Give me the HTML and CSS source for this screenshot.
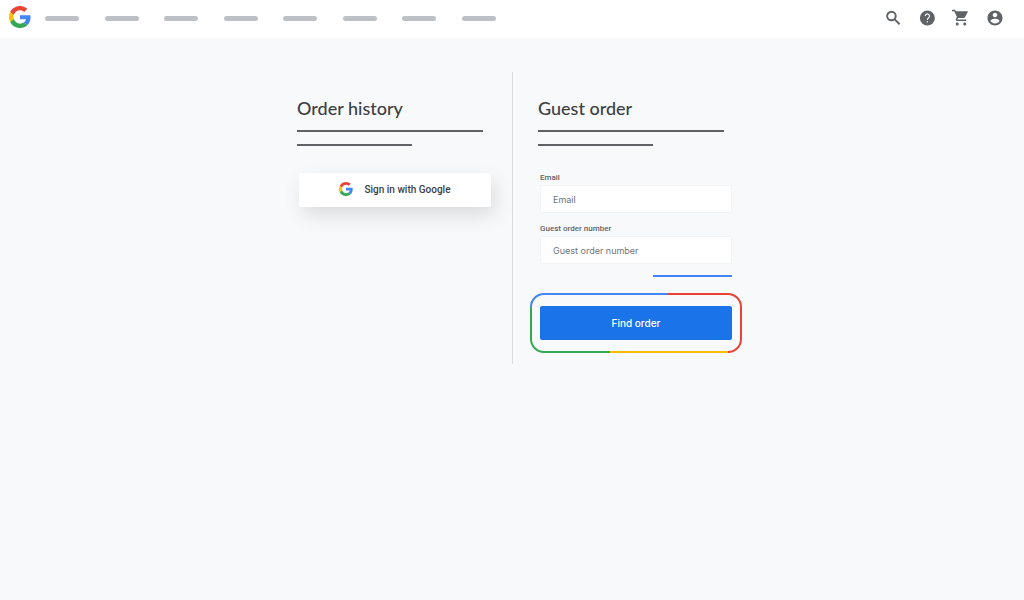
FILE: index.html
```html
<!DOCTYPE html>
<html lang="en">
<head>
  <meta charset="UTF-8" />
  <meta name="viewport" content="width=device-width, initial-scale=1.0"/>
  <title>Find your order</title>
  <link rel="stylesheet" href="styles.css">
</head>
<body>

  <svg width="0" height="0" class="sprite" aria-hidden="true">
    <symbol id="g-logo" viewBox="0 0 48 48">
      <path fill="#ea4335" d="M24 9.500c3.540 0 6.710 1.220 9.210 3.600l6.850-6.850C35.900 2.380 30.470 0 24 0 14.620 0 6.510 5.380 2.560 13.220l7.980 6.190C12.430 13.720 17.740 9.500 24 9.500z"/>
      <path fill="#4285f4" d="M46.980 24.550c0-1.570-.15-3.090-.38-4.550H24v9.020h12.940c-.58 2.960-2.260 5.480-4.780 7.180l7.730 6c4.510-4.180 7.090-10.360 7.090-17.650z"/>
      <path fill="#fbbc05" d="M10.530 28.590c-.48-1.450-.76-2.990-.76-4.590s.27-3.140.76-4.590l-7.980-6.190C.92 16.460 0 20.120 0 24c0 3.880.92 7.540 2.560 10.780l7.970-6.190z"/>
      <path fill="#34a853" d="M24 48c6.480 0 11.930-2.130 15.890-5.810l-7.730-6c-2.150 1.450-4.920 2.300-8.160 2.300-6.260 0-11.570-4.220-13.470-9.910l-7.980 6.190C6.510 42.620 14.620 48 24 48z"/>
    </symbol>
  </svg>

  <header>
    <a class="logo" href="#" aria-label="Google home"><svg><use href="#g-logo"/></svg></a>

    <nav aria-label="Main">
      <a href="#" aria-label="Menu item 1"></a>
      <a href="#" aria-label="Menu item 2"></a>
      <a href="#" aria-label="Menu item 3"></a>
      <a href="#" aria-label="Menu item 4"></a>
      <a href="#" aria-label="Menu item 5"></a>
      <a href="#" aria-label="Menu item 6"></a>
      <a href="#" aria-label="Menu item 7"></a>
      <a href="#" aria-label="Menu item 8"></a>
    </nav>

    <div class="actions">
      <button type="button" aria-label="Search">
        <svg viewBox="0 0 24 24"><g fill="none" stroke="#5f6368" stroke-width="2.600"><circle cx="9.900" cy="9.400" r="5.700"/><path d="M14 13.500l6.800 6.800"/></g></svg>
      </button>
      <button type="button" aria-label="Help">
        <svg viewBox="0 0 24 24"><circle cx="12.500" cy="12" r="10"/><path d="M9.700 9.400a2.800 2.800 0 1 1 4.500 2.200c-1.100.8-1.700 1.400-1.700 2.900M12.500 16.200v1.800" fill="none" stroke="#fff" stroke-width="1.500"/></svg>
      </button>
      <button type="button" aria-label="Cart">
        <svg viewBox="0 0 24 24"><path d="M7 18c-1.100 0-1.990.9-1.990 2S5.900 22 7 22s2-.9 2-2-.9-2-2-2zM0 1v2h3l3.600 7.590-1.350 2.450c-.16.28-.25.61-.25.960 0 1.100.9 2 2 2h12v-2H7.420c-.14 0-.25-.11-.25-.25l.03-.12.900-1.630h7.450c.75 0 1.410-.41 1.750-1.030l3.580-6.490A1 1 0 0 0 20 3H5.210l-.94-2H0zm17 17c-1.100 0-1.990.9-1.990 2s.89 2 1.990 2 2-.9 2-2-.9-2-2-2z"/></svg>
      </button>
      <button type="button" aria-label="Account">
        <svg viewBox="0 0 24 24"><path d="M12 2C6.480 2 2 6.480 2 12s4.480 10 10 10 10-4.480 10-10S17.520 2 12 2zm0 3c1.660 0 3 1.340 3 3s-1.340 3-3 3-3-1.340-3-3 1.340-3 3-3zm0 14.200c-2.500 0-4.710-1.280-6-3.220.03-1.990 4-3.080 6-3.080 1.990 0 5.970 1.090 6 3.080-1.290 1.940-3.500 3.220-6 3.220z"/></svg>
      </button>
    </div>
  </header>

  <main>
    <section class="history">
      <h1>Order history</h1>
      <div class="line"></div>
      <div class="line short"></div>
      <button type="button" class="signin-btn">
        <svg><use href="#g-logo"/></svg>
        Sign in with Google
      </button>
    </section>

    <section class="guest">
      <h1>Guest order</h1>
      <div class="line"></div>
      <div class="line short"></div>
      <form>
        <label for="email">Email</label>
        <input type="email" id="email" placeholder="Email">
        <label for="orderNumber">Guest order number</label>
        <input type="text" id="orderNumber" placeholder="Guest order number">
        <a class="help-link" href="#" aria-label="Find your order number"></a>
        <div class="find">
          <svg class="ring" viewBox="0 0 212 60" preserveAspectRatio="none" aria-hidden="true">
            <path stroke="#4285f4" d="M1 14A13 13 0 0 1 14 1H138"/>
            <path stroke="#ea4335" d="M138 1H198A13 13 0 0 1 211 14V46A13 13 0 0 1 198 59"/>
            <path stroke="#fbbc05" d="M198 59H80"/>
            <path stroke="#34a853" d="M80 59H14A13 13 0 0 1 1 46V14"/>
          </svg>
          <button type="submit" class="find-btn">Find order</button>
        </div>
      </form>
    </section>
  </main>

</body>
</html>
```

FILE: styles.css
```css
* {
  box-sizing: border-box;
}

body {
  font-family: Roboto, sans-serif;
  margin: 0;
  background-color: #f8f9fb;
  color: #3c4043;
}

button {
  font-family: inherit;
  border: none;
  cursor: pointer;
}

.sprite {
  position: absolute;
}

header {
  display: flex;
  align-items: center;
  height: 38px;
  padding: 0 20px 2px 9px;
  background: #fff;
}

.logo svg {
  display: block;
  width: 22px;
  height: 22px;
  margin-bottom: 3px;
}

nav {
  display: flex;
  justify-content: space-between;
  width: 451px;
  margin-left: 14px;
}

nav a {
  width: 34px;
  height: 5px;
  border-radius: 3px;
  background: #bdc1c6;
}

.actions {
  display: flex;
  gap: 16px;
  margin-left: auto;
}

.actions button {
  padding: 0;
  background: none;
}

.actions svg {
  display: block;
  width: 18px;
  height: 18px;
  fill: #5f6368;
}

main {
  display: grid;
  grid-template-columns: 1fr 1fr;
  padding-top: 34px;
}

section {
  min-height: 292px;
  padding-top: 25px;
}

.history {
  display: flex;
  flex-direction: column;
  padding-left: calc(100% - 215px);
}

.guest {
  border-left: 1px solid #dadce0;
  padding-left: 25px;
}

h1 {
  margin: 0 0 11px;
  font-family: Lato, sans-serif;
  font-size: 18px;
  font-weight: 500;
  line-height: 22px;
}

.line {
  width: 186px;
  height: 2px;
  margin-bottom: 12px;
  background: #5f6368;
}

.line.short {
  width: 115px;
}

.signin-btn {
  display: flex;
  align-items: center;
  justify-content: center;
  gap: 11px;
  width: 192px;
  height: 34px;
  margin: 15px 0 0 2px;
  padding: 0 6px 2px;
  border-radius: 2px;
  background: #fff;
  color: #3c4043;
  font-size: 10px;
  font-weight: 500;
  box-shadow: 4px 8px 20px rgba(0, 0, 0, 0.12);
}

.signin-btn svg {
  width: 14px;
  height: 14px;
}

form {
  width: 192px;
  margin: 27px 0 0 2px;
}

label {
  display: block;
  margin-bottom: 2px;
  color: #5f6368;
  font-size: 8px;
  font-weight: 500;
  line-height: 10px;
}

input {
  display: block;
  width: 100%;
  height: 28px;
  margin-bottom: 11px;
  padding: 0 12px;
  border: 1px solid #f1f3f4;
  border-radius: 2px;
  background: #fff;
  font-family: Inter, sans-serif;
  font-size: 9px;
}

input::placeholder {
  color: #70757a;
}

.help-link {
  display: block;
  width: 79px;
  height: 2px;
  margin: 0 0 16px auto;
  background: #4285f4;
}

.find {
  position: relative;
  margin: 0 -10px;
  padding: 13px 10px;
}

.ring {
  position: absolute;
  inset: 0;
  width: 100%;
  height: 100%;
  fill: none;
  stroke-width: 2;
}

.find-btn {
  position: relative;
  display: block;
  width: 100%;
  height: 34px;
  border-radius: 2px;
  background: #1a73e8;
  color: #fff;
  font-family: Inter, sans-serif;
  font-size: 10px;
  font-weight: 500;
}

@media (max-width: 520px) {
  main {
    grid-template-columns: 1fr;
    padding-left: 20px;
  }

  .history {
    min-height: 0;
    padding-left: 26px;
    padding-bottom: 26px;
  }

  .guest {
    border-left: none;
  }
}
```
